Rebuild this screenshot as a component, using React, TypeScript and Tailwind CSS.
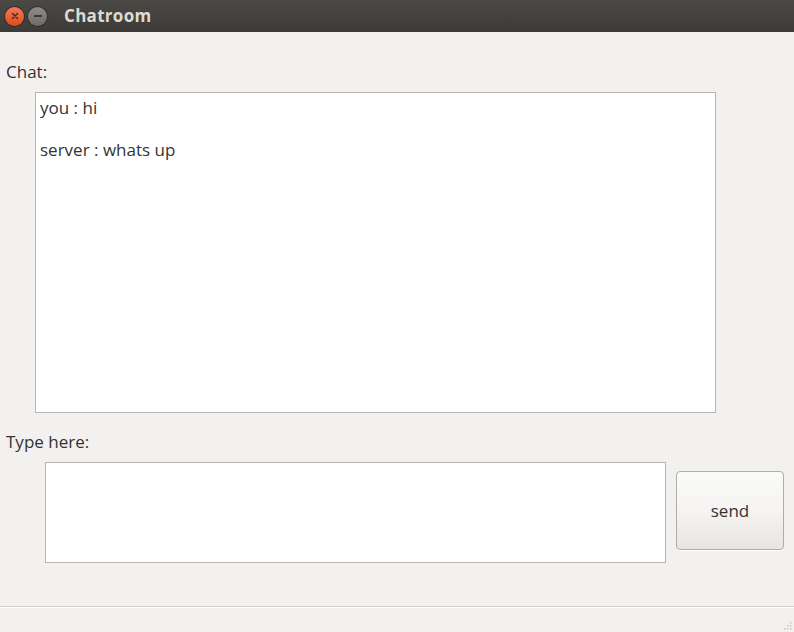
import React from 'react'

// Ubuntu-style window: title bar + chat form
function TitleBar() {
  return (
    <div className="h-[32px] flex items-center bg-gradient-to-b from-[#4a4945] to-[#3c3b37] select-none">
      <div className="flex items-center gap-[4px] pl-[5px]">
        <div className="w-[19px] h-[19px] rounded-full bg-gradient-to-b from-[#f37854] to-[#df4a16] flex items-center justify-center shadow-[0_0_0_1px_#2e2d2a]">
          <svg width="8" height="8" viewBox="0 0 8 8">
            <path d="M1.5 1.5 L6.5 6.5 M6.5 1.5 L1.5 6.5" stroke="#3a2a22" strokeWidth="1.4" strokeLinecap="round" />
          </svg>
        </div>
        <div className="w-[19px] h-[19px] rounded-full bg-gradient-to-b from-[#8e8d89] to-[#6c6b67] flex items-center justify-center shadow-[0_0_0_1px_#2e2d2a]">
          <div className="w-[8px] h-[1.5px] bg-[#3c3b37]" />
        </div>
      </div>
      <span
        className="ml-[17px] text-[17px] font-bold text-[#dfdbd2] tracking-[0.3px]"
        style={{ fontFamily: '"Open Sans", "DejaVu Sans", sans-serif' }}
      >
        Chatroom
      </span>
    </div>
  )
}

export default function App() {
  const messages = ['you : hi', 'server : whats up']

  return (
    <div
      className="w-[794px] h-[632px] bg-[#f2f1f0] flex flex-col text-[#333333]"
      style={{ fontFamily: '"Open Sans", "Noto Sans", sans-serif' }}
    >
      <TitleBar />

      <div className="flex-1 flex flex-col">
        <div className="pl-[6px] pt-[29px] text-[17px] leading-[22px]">Chat:</div>
        <div className="ml-[35px] mt-[9px] w-[681px] h-[321px] bg-white border border-[#b8b5b0] px-[4px] pt-[4px]">
          {messages.map((m, i) => (
            <div key={i} className="text-[17px] leading-[22px] mb-[20px]">{m}</div>
          ))}
        </div>

        <div className="pl-[6px] pt-[18px] text-[17px] leading-[22px]">Type here:</div>
        <div className="flex items-start mt-[9px]">
          <div className="ml-[45px] w-[621px] h-[101px] bg-white border border-[#b8b5b0]" />
          <button className="ml-[10px] mt-[9px] w-[108px] h-[79px] rounded-[4px] border border-[#b0ada8] bg-gradient-to-b from-[#fbfbfa] via-[#f5f4f3] to-[#e6e5e3] text-[17px] text-[#333333] shadow-[0_1px_0_#ffffff]">
            send
          </button>
        </div>
      </div>

      <div className="h-[26px] border-t border-[#d0cecb] shadow-[inset_0_1px_0_#ffffff] bg-[#f2f1f0] flex justify-end items-end">
        <svg width="10" height="10" viewBox="0 0 10 10" className="mr-[1px] mb-[1px]">
          {[0, 1, 2].map(r =>
            [0, 1, 2].filter(c => c + r >= 2).map(c => (
              <rect key={`${r}-${c}`} x={c * 3 + 1} y={r * 3 + 1} width="1.5" height="1.5" fill="#c9c7c4" />
            ))
          )}
        </svg>
      </div>
    </div>
  )
}
